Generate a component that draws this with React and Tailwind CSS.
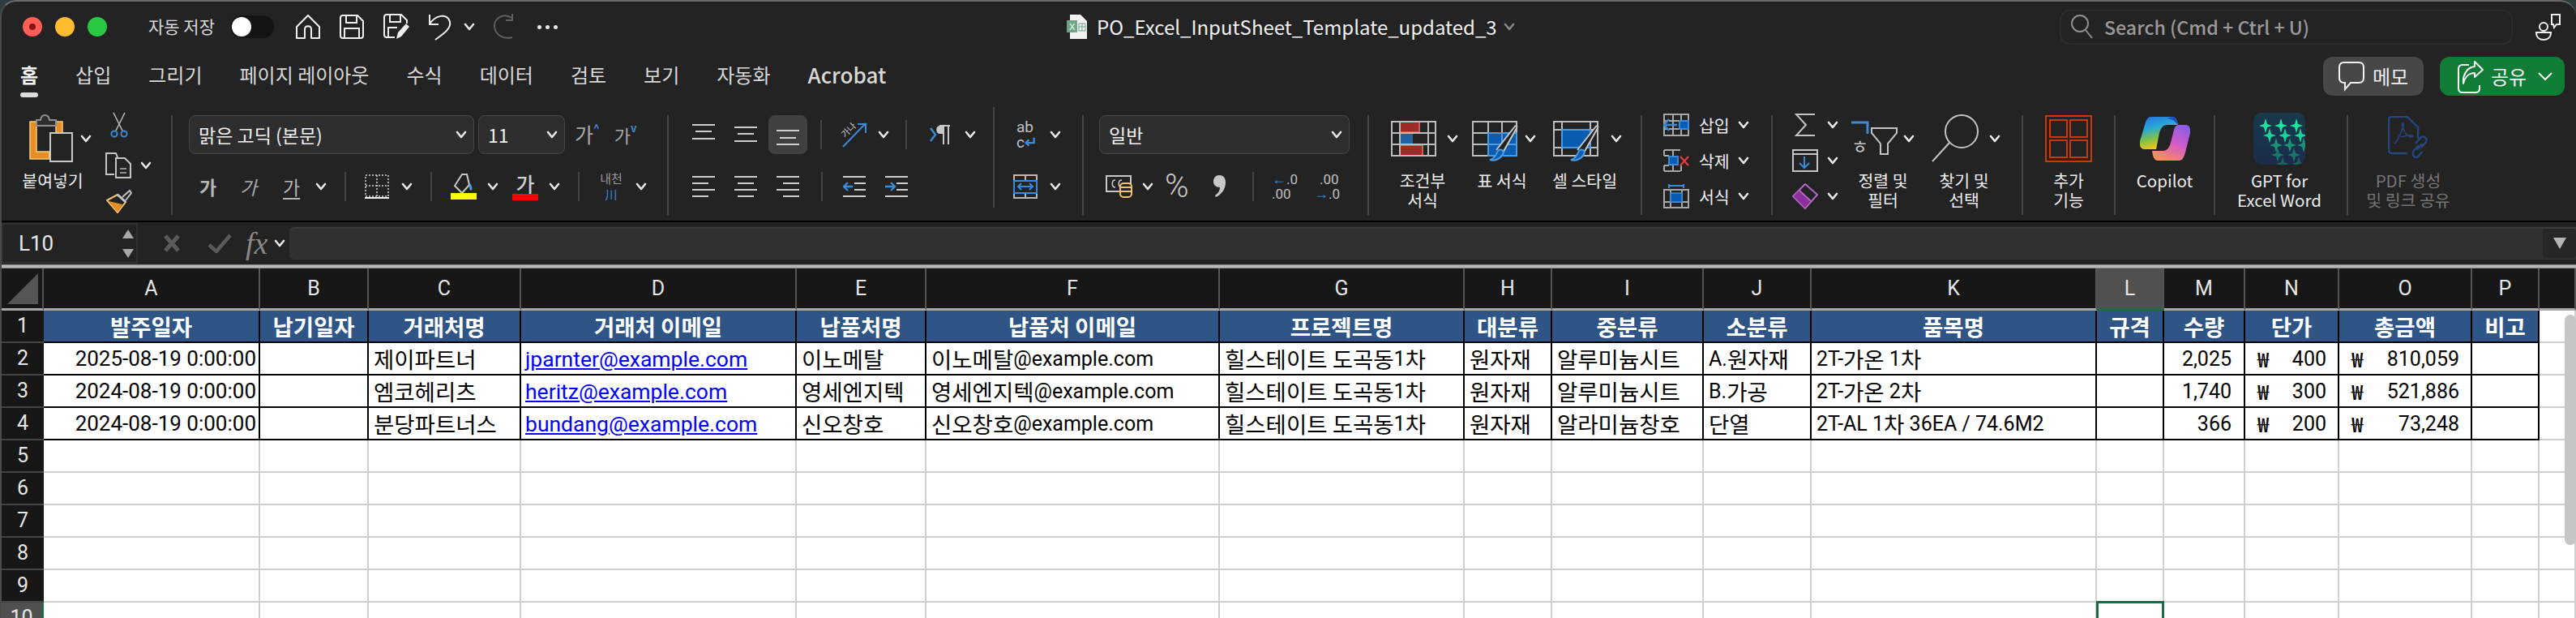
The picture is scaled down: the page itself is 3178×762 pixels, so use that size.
import React from 'react';

const KR = "font-['Noto_Sans_CJK_KR',sans-serif]";

const columns = ['A', 'B', 'C', 'D', 'E', 'F', 'G', 'H', 'I', 'J', 'K', 'L', 'M', 'N', 'O', 'P'];
const headers = ['발주일자', '납기일자', '거래처명', '거래처 이메일', '납품처명', '납품처 이메일', '프로젝트명', '대분류', '중분류', '소분류', '품목명', '규격', '수량', '단가', '총금액', '비고'];
const rows = [
  ['2025-08-19 0:00:00', '', '제이파트너', 'jparnter@example.com', '이노메탈', '이노메탈@example.com', '힐스테이트 도곡동1차', '원자재', '알루미늄시트', 'A.원자재', '2T-가온 1차', '', '2,025', '400', '810,059', ''],
  ['2024-08-19 0:00:00', '', '엠코헤리츠', 'heritz@example.com', '영세엔지텍', '영세엔지텍@example.com', '힐스테이트 도곡동1차', '원자재', '알루미늄시트', 'B.가공', '2T-가온 2차', '', '1,740', '300', '521,886', ''],
  ['2024-08-19 0:00:00', '', '분당파트너스', 'bundang@example.com', '신오창호', '신오창호@example.com', '힐스테이트 도곡동1차', '원자재', '알라미늄창호', '단열', '2T-AL 1차 36EA / 74.6M2', '', '366', '200', '73,248', ''],
];

// hangul runs larger than latin, the sheet font has wide hangul and narrow digits
const Mixed = ({ text }) =>
  text.split(/([\u3131-\uD79D]+)/).map((part, i) =>
    /[\u3131-\uD79D]/.test(part) ? (
      <span key={i} className="text-[27.5px]">{part}</span>
    ) : (
      <span key={i} className="font-['Roboto',sans-serif] text-[25px] whitespace-pre">{part}</span>
    )
  );

const Chev = ({ className = '', color = '#e8e8e8' }) => (
  <svg width="14" height="10" viewBox="0 0 14 10" className={`shrink-0 ${className}`}>
    <path d="M2 2 L7 8 L12 2" fill="none" stroke={color} strokeWidth="2.6" strokeLinecap="round" strokeLinejoin="round" />
  </svg>
);

const BigSep = () => <div className="w-[2px] h-[123px] mt-[10px] shrink-0 bg-[#454545]" />;
const TopSep = () => <div className="w-[2px] h-[124px] shrink-0 bg-[#454545]" />;
const SmallSep = ({ className = '' }) => <div className={`w-[2px] h-[36px] shrink-0 bg-[#454545] ${className}`} />;

const Lines = ({ lines, className = '' }) => (
  <svg width="28" height="28" viewBox="0 0 28 28" className={`shrink-0 ${className}`}>
    {lines.map(([x1, x2, y], i) => (
      <line key={i} x1={x1} x2={x2} y1={y} y2={y} stroke="#cdcdcd" strokeWidth="2" />
    ))}
  </svg>
);

const Paste = () => (
  <svg width="54" height="60" viewBox="0 0 54 60" className="shrink-0">
    <path d="M1 9 H9 V46 H25 V55 H1 Z" fill="#e58e26" stroke="#f5cd7e" strokeWidth="1.5" />
    <path d="M33 9 H41 V23 H33 Z" fill="#e58e26" stroke="#f5cd7e" strokeWidth="1.5" />
    <path d="M9 14 V7 H14 C15 -1 24 -1 25 7 H33 V14 Z" fill="#2e2e2e" stroke="#8f8f8f" strokeWidth="2" />
    <rect x="26" y="23" width="27" height="35" fill="#232323" stroke="#c9c9c9" strokeWidth="2" />
  </svg>
);

const Scissors = () => (
  <svg width="22" height="32" viewBox="0 0 22 32">
    <path d="M4 1 L15 23 M18 1 L7 23" stroke="#b8b8b8" strokeWidth="1.6" fill="none" />
    <circle cx="5" cy="27" r="3.6" fill="none" stroke="#3a8ad8" strokeWidth="2" />
    <circle cx="17" cy="27" r="3.6" fill="none" stroke="#3a8ad8" strokeWidth="2" />
  </svg>
);

const CopyIcon = () => (
  <svg width="32" height="32" viewBox="0 0 32 32">
    <path d="M11 27 H1 V1 H13 L15 6" fill="none" stroke="#c4c4c4" strokeWidth="2" />
    <path d="M13 7 H24 L31 14 V31 H13 Z" fill="none" stroke="#c4c4c4" strokeWidth="2" />
    <path d="M18 20 H26 M18 25 H26" stroke="#8f8f8f" strokeWidth="2" />
  </svg>
);

const Brush = () => (
  <svg width="32" height="30" viewBox="0 0 32 30">
    <path d="M20 10 L29 2 L31 5 L24 14" fill="none" stroke="#c4c4c4" strokeWidth="2" />
    <path d="M1 14 L14 7 L24 16 L14 29 Z" fill="none" stroke="#f3c26b" strokeWidth="2" />
    <path d="M3 15 L20 19 L14 28 Z" fill="#e58e26" />
    <path d="M14 7 L24 16" stroke="#c4c4c4" strokeWidth="3" />
  </svg>
);

const Borders = () => (
  <svg width="30" height="30" viewBox="0 0 30 30">
    <rect x="1" y="1" width="28" height="26" fill="none" stroke="#d8d8d8" strokeWidth="1.5" strokeDasharray="2 2" />
    <path d="M15 1 V27 M1 14 H29" stroke="#d8d8d8" strokeWidth="1.5" strokeDasharray="2 2" />
    <path d="M0 29 H30" stroke="#f2f2f2" strokeWidth="2" />
  </svg>
);

const Fill = () => (
  <svg width="32" height="32" viewBox="0 0 32 32">
    <path d="M14 1 L20 1 L23 14 L14 24 L5 15 Z" fill="none" stroke="#c8c8c8" strokeWidth="2" />
    <path d="M24 12 C27 16 27 20 25 21 C23 20 22 16 24 12 Z" fill="#4c9be0" />
    <rect x="0" y="24" width="32" height="8" fill="#ffff00" />
  </svg>
);

const Orientation = () => (
  <svg width="34" height="32" viewBox="0 0 34 32" className="overflow-visible">
    <path d="M4 31 L32 2 M22 3 H32 V14" fill="none" stroke="#3a8ad8" strokeWidth="2" />
    <text x="1" y="17" fontSize="11" fill="#c8c8c8" transform="rotate(-45 8 12)" fontFamily="Noto Sans CJK KR">가나</text>
  </svg>
);

const Pilcrow = () => (
  <svg width="26" height="28" viewBox="0 0 26 28" className="shrink-0">
    <path d="M1 6 L7 14 L1 22" fill="none" stroke="#3a8ad8" strokeWidth="2.4" />
    <path d="M17 3 H12 C7 3 7 13 12 13 H17 Z" fill="#c8c8c8" />
    <path d="M17 3 V26 M23 3 V26 M12 3 H25" fill="none" stroke="#c8c8c8" strokeWidth="2" />
  </svg>
);

const Comma = () => (
  <svg width="16" height="28" viewBox="0 0 16 28" className="shrink-0">
    <path d="M7 0 C12 0 15 3 15 9 C15 17 10 24 3 27 L2 25 C6 22 8 19 8 15 C3 15 0 12 0 8 C0 3 3 0 7 0 Z" fill="#c8c8c8" />
  </svg>
);

const Indent = ({ flip }) => (
  <svg width="28" height="26" viewBox="0 0 28 26" className="shrink-0">
    <path d="M0 1 H28 M14 9 H28 M14 17 H28 M0 25 H28" stroke="#cdcdcd" strokeWidth="2" />
    {flip ? (
      <path d="M0 13 H11 M7 8 L12 13 L7 18" fill="none" stroke="#3a8ad8" strokeWidth="2.4" />
    ) : (
      <path d="M1 13 H12 M6 8 L1 13 L6 18" fill="none" stroke="#3a8ad8" strokeWidth="2.4" />
    )}
  </svg>
);

const Merge = () => (
  <svg width="30" height="30" viewBox="0 0 30 30" className="shrink-0">
    <rect x="1" y="1" width="28" height="28" fill="none" stroke="#b8b8b8" strokeWidth="2" />
    <path d="M15 1 V8 M15 23 V29" stroke="#b8b8b8" strokeWidth="2" />
    <rect x="1" y="8" width="28" height="15" fill="#232323" stroke="#3a8ad8" strokeWidth="2" />
    <path d="M6 15 H24 M10 11 L6 15 L10 19 M20 11 L24 15 L20 19" fill="none" stroke="#3a8ad8" strokeWidth="2" />
  </svg>
);

const Currency = () => (
  <svg width="33" height="28" viewBox="0 0 33 28" className="shrink-0">
    <rect x="1" y="1" width="30" height="19" fill="none" stroke="#c8c8c8" strokeWidth="2" />
    <path d="M12 6 C7 6 7 15 12 15 M20 6 C15 6 15 15 20 15" fill="none" stroke="#c8c8c8" strokeWidth="1.6" />
    <rect x="18" y="10" width="14" height="17" rx="4" fill="#232323" stroke="#f3c26b" strokeWidth="2" />
    <path d="M18 15 H32 M18 20 H32" stroke="#f3c26b" strokeWidth="2" />
  </svg>
);

const GridBase = ({ children }) => (
  <svg width="56" height="44" viewBox="0 0 56 44" className="shrink-0">
    {children}
    <path d="M1 1 H55 V43 H1 Z M1 15 H55 M1 29 H55 M11 1 V43 M46 1 V43" fill="none" stroke="#bdbdbd" strokeWidth="2" />
  </svg>
);

const CondFormat = () => (
  <GridBase>
    <rect x="10" y="0" width="26" height="15" fill="#9f2a2a" />
    <rect x="10" y="15" width="17" height="14" fill="#22639f" />
    <rect x="10" y="29" width="30" height="15" fill="#9f2a2a" />
    <path d="M11 1 H35 V14 H11 Z M11 30 H39 V43 H11 Z" fill="none" stroke="#d65a5a" strokeWidth="2" />
  </GridBase>
);

const PaintBrush = () => (
  <g>
    <path d="M30 36 L52 8 C54 5 56 6 55 9 L37 41" fill="#232323" stroke="#c8c8c8" strokeWidth="2" />
    <path d="M22 48 C30 47 30 38 33 36 C37 34 40 38 38 41 C35 47 28 50 22 48 Z" fill="#0a5cb0" stroke="#4c9be0" strokeWidth="2" />
  </g>
);

const TableFormat = () => (
  <svg width="58" height="52" viewBox="0 0 58 52" className="shrink-0 mt-[8px]">
    <path d="M1 1 H55 V43 H1 Z M1 15 H55 M1 29 H55 M20 1 V43 M37 1 V43" fill="none" stroke="#bdbdbd" strokeWidth="2" />
    <rect x="20" y="15" width="35" height="28" fill="#0a5cb0" stroke="#4c9be0" strokeWidth="2" />
    <path d="M37 15 V43 M20 29 H55" stroke="#4c9be0" strokeWidth="2" />
    <PaintBrush />
  </svg>
);

const CellStyle = () => (
  <svg width="58" height="52" viewBox="0 0 58 52" className="shrink-0 mt-[8px]">
    <path d="M1 1 H55 V43 H1 Z M1 11 H55 M1 33 H55 M11 1 V43 M46 1 V43" fill="none" stroke="#bdbdbd" strokeWidth="2" />
    <rect x="11" y="11" width="35" height="22" fill="#0a5cb0" stroke="#4c9be0" strokeWidth="2" />
    <PaintBrush />
  </svg>
);

const CellInsert = () => (
  <svg width="32" height="28" viewBox="0 0 32 28" className="shrink-0">
    <path d="M1 1 H31 V27 H1 Z M1 9 H31 M1 19 H31 M12 1 V27 M22 1 V27" fill="none" stroke="#a8a8a8" strokeWidth="2" />
    <rect x="20" y="9" width="11" height="10" fill="#0a5cb0" stroke="#3a8ad8" strokeWidth="2" />
    <path d="M1 14 H17 M7 7 L1 14 L7 21" fill="#232323" stroke="#3a8ad8" strokeWidth="2.4" />
  </svg>
);

const CellDelete = () => (
  <svg width="32" height="28" viewBox="0 0 32 28" className="shrink-0">
    <path d="M1 1 H21 M1 27 H21 M1 1 V8 M1 20 V27 M12 1 V8 M12 20 V27 M22 20 V27" fill="none" stroke="#a8a8a8" strokeWidth="2" />
    <rect x="7" y="9" width="11" height="10" fill="#0a5cb0" stroke="#3a8ad8" strokeWidth="2" />
    <path d="M1 8 H7 M1 20 H7" stroke="#a8a8a8" strokeWidth="2" />
    <path d="M21 9 L31 20 M31 9 L21 20" stroke="#e03c3c" strokeWidth="2.4" />
  </svg>
);

const CellFormat = () => (
  <svg width="32" height="30" viewBox="0 0 32 30" className="shrink-0">
    <path d="M7 2 H25 M7 0 V5 M25 0 V5" stroke="#3a8ad8" strokeWidth="2" />
    <path d="M1 7 H31 V29 H1 Z M1 22 H31 M9 7 V29 M23 7 V29" fill="none" stroke="#a8a8a8" strokeWidth="2" />
    <rect x="9" y="11" width="14" height="11" fill="#0a5cb0" stroke="#3a8ad8" strokeWidth="1.5" />
  </svg>
);

const Sigma = () => (
  <svg width="32" height="28" viewBox="0 0 32 28" className="shrink-0">
    <path d="M28 1 H5 L17 14 L5 27 H28" fill="none" stroke="#c4c4c4" strokeWidth="2" />
  </svg>
);

const FillDown = () => (
  <svg width="32" height="28" viewBox="0 0 32 28" className="shrink-0">
    <path d="M1 1 H31 V27 H1 Z M1 6 H31" fill="none" stroke="#c4c4c4" strokeWidth="2" />
    <path d="M15 9 V23 M9 17 L15 23 L21 17" fill="none" stroke="#3a8ad8" strokeWidth="2" />
  </svg>
);

const Eraser = () => (
  <svg width="32" height="32" viewBox="0 0 32 32" className="shrink-0">
    <path d="M1 16 L9 24 L16 31 L31 14 L16 1 Z" fill="none" stroke="#b564c4" strokeWidth="2" />
    <path d="M2 16 L9 9 L22 22 L16 30 Z" fill="#8a2f9c" />
    <path d="M9 9 L23 22" stroke="#b564c4" strokeWidth="2" />
  </svg>
);

const SortFilter = () => (
  <svg width="58" height="44" viewBox="0 0 58 44" className="shrink-0 overflow-visible">
    <path d="M0 2 H20 V16" fill="none" stroke="#3a8ad8" strokeWidth="3" />
    <path d="M25 9 H56 V15 L45 28 V41 H36 V28 L25 15 Z" fill="none" stroke="#c4c4c4" strokeWidth="2" />
    <text x="0" y="40" fontSize="23" fill="#c4c4c4" fontFamily="Noto Sans CJK KR">ㅎ</text>
  </svg>
);

const Magnifier = () => (
  <svg width="60" height="60" viewBox="0 0 60 60" className="shrink-0">
    <circle cx="37" cy="21" r="20" fill="none" stroke="#c4c4c4" strokeWidth="2" />
    <path d="M22 35 L1 58" stroke="#c4c4c4" strokeWidth="2" />
  </svg>
);

const AddIns = () => (
  <svg width="58" height="58" viewBox="0 0 58 58">
    <rect x="1" y="1" width="56" height="56" fill="none" stroke="#c8380f" strokeWidth="2" />
    <path d="M6 6 H27 V27 H6 Z M31 6 H52 V27 H31 Z M6 31 H27 V52 H6 Z M31 31 H52 V52 H31 Z" fill="none" stroke="#c8380f" strokeWidth="2" />
  </svg>
);

const Copilot = () => (
  <svg width="62" height="54" viewBox="0 0 62 54">
    <defs>
      <linearGradient id="cpA" x1="0" y1="0" x2="0.3" y2="1">
        <stop offset="0" stopColor="#1f6fe0" />
        <stop offset="0.4" stopColor="#2aa8d8" />
        <stop offset="0.7" stopColor="#7cc04a" />
        <stop offset="1" stopColor="#f5c518" />
      </linearGradient>
      <linearGradient id="cpB" x1="0.8" y1="0" x2="0.3" y2="1">
        <stop offset="0" stopColor="#8a5ce8" />
        <stop offset="0.5" stopColor="#d45cc8" />
        <stop offset="1" stopColor="#f7905a" />
      </linearGradient>
    </defs>
    <path d="M14 0 H40 C44 0 46 4 47 10 H34 C28 10 26 14 24 20 L20 40 H6 C1 40 -1 36 0 30 L6 10 C8 3 10 0 14 0 Z" fill="url(#cpA)" />
    <path d="M47 10 C42 4 38 2 32 2 L40 0 C44 0 46 5 47 10 Z" fill="#1c4fc4" />
    <path d="M48 54 H22 C18 54 16 50 15 42 H28 C34 42 36 38 38 32 L42 16 C44 10 46 10 52 10 H56 C61 10 63 14 62 20 L56 44 C54 51 52 54 48 54 Z" fill="url(#cpB)" />
  </svg>
);

const Star = ({ x, y, op }) => (
  <path
    d={`M${x} ${y - 9} L${x + 2} ${y - 2} L${x + 8} ${y} L${x + 2} ${y + 2} L${x} ${y + 9} L${x - 2} ${y + 2} L${x - 8} ${y} L${x - 2} ${y - 2} Z`}
    fill="#19e6a0"
    opacity={op}
  />
);

const GptIcon = () => (
  <svg width="64" height="64" viewBox="0 0 64 64">
    <defs>
      <linearGradient id="gptBg" x1="0" y1="0" x2="0" y2="1">
        <stop offset="0" stopColor="#173a4a" />
        <stop offset="1" stopColor="#1c2c4a" />
      </linearGradient>
      <clipPath id="gptClip">
        <rect width="64" height="64" rx="10" />
      </clipPath>
    </defs>
    <g clipPath="url(#gptClip)">
      <rect width="64" height="64" fill="url(#gptBg)" />
      <Star x={15} y={16} op={1} />
      <Star x={34} y={16} op={1} />
      <Star x={53} y={16} op={1} />
      <Star x={20} y={28} op={0.9} />
      <Star x={39} y={28} op={0.9} />
      <Star x={58} y={28} op={0.9} />
      <Star x={28} y={40} op={0.55} />
      <Star x={45} y={40} op={0.55} />
      <Star x={62} y={40} op={0.55} />
      <Star x={30} y={52} op={0.4} />
      <Star x={50} y={52} op={0.4} />
      <Star x={36} y={63} op={0.3} />
      <Star x={56} y={63} op={0.3} />
    </g>
  </svg>
);

const PdfIcon = () => (
  <svg width="50" height="56" viewBox="0 0 50 56">
    <path d="M24 46 H5 C2 46 1 44 1 42 V4 C1 2 2 1 5 1 H24 L37 14 V28" fill="none" stroke="#26467c" strokeWidth="2.4" />
    <path d="M8 34 C14 28 20 12 19 9 C17 8 17 14 22 22 C26 26 30 27 31 25 C30 23 22 24 16 26" fill="none" stroke="#26467c" strokeWidth="1.6" />
    <path d="M34 34 L41 26 C45 24 49 28 47 32 L41 39 M38 36 L31 44 C30 49 33 53 37 50 L42 44 M36 42 L42 34" fill="none" stroke="#26467c" strokeWidth="2.4" />
  </svg>
);

const ExcelFile = () => (
  <svg width="26" height="30" viewBox="0 0 26 30">
    <path d="M4 0 H17 L25 8 V30 H4 Z" fill="#f2f2f2" />
    <rect x="0" y="7" width="13" height="15" fill="#6da587" />
    <text x="3" y="19" fontSize="11" fill="#ffffff" fontFamily="Liberation Sans">X</text>
    <path d="M15 11 H23 V20 H15 Z M19 11 V20 M15 15 H23" fill="none" stroke="#6da587" strokeWidth="1" />
  </svg>
);

const Button = ({ icon, lines, width, pad, gap, chev = true, labelClass = 'text-[#ececec]' }) => (
  <div className={`flex flex-col items-center shrink-0 ${width}`}>
    <div className={`h-[78px] w-full flex items-center ${pad}`}>
      {icon}
      {chev && <Chev className={gap} />}
    </div>
    <div className={`text-[20.5px] leading-[24px] text-center whitespace-nowrap ${labelClass}`}>
      {lines.map((line) => (
        <div key={line}>{line}</div>
      ))}
    </div>
  </div>
);

const SmallRow = ({ children }) => <div className="h-[44px] flex items-center">{children}</div>;

const Select = ({ text, width, textClass = 'pl-[11px]', chevClass = 'ml-auto mr-[8px]' }) => (
  <div className={`h-[48px] shrink-0 flex items-center rounded-[8px] bg-[#2e2e2e] border border-[#454545] ${width}`}>
    <span className={`text-[23px] text-[#f0f0f0] whitespace-nowrap ${textClass}`}>{text}</span>
    <Chev className={chevClass} />
  </div>
);

const Ribbon = () => (
  <div className="flex h-[140px] items-start">
    {/* paste */}
    <div className="w-[209px] shrink-0 flex">
      <Button width="w-[126px]" pad="pl-[34px]" gap="ml-[9px]" icon={<Paste />} lines={['붙여넣기']} />
      <div className="flex flex-col items-start pt-[6px] ml-[2px]">
        <div className="h-[44px] flex items-start pl-[6px]"><Scissors /></div>
        <div className="h-[44px] flex items-center">
          <CopyIcon />
          <Chev className="ml-[11px]" />
        </div>
        <div className="h-[44px] flex items-center pl-[1px]"><Brush /></div>
      </div>
    </div>
    <BigSep />

    {/* font */}
    <div className="w-[610px] shrink-0 pt-[10px]">
      <div className="flex items-center pl-[20px]">
        <Select text="맑은 고딕 (본문)" width="w-[352px]" chevClass="ml-auto mr-[8px]" />
        <Select text="11" width="w-[107px] ml-[5px]" />
        <span className="ml-[12px] text-[25px] text-[#a8a8a8]">가</span>
        <span className="text-[13px] text-[#3a8ad8] -mt-[16px] font-bold">^</span>
        <span className="ml-[18px] text-[22px] text-[#a8a8a8]">가</span>
        <span className="text-[13px] text-[#3a8ad8] -mt-[16px] font-bold">v</span>
      </div>
      <div className="flex items-center h-[36px] mt-[22px] pl-[33px]">
        <span className="text-[23px] font-bold text-[#b4b4b4] w-[21px]">가</span>
        <span className="ml-[29px] text-[23px] italic text-[#a8a8a8] w-[21px]">가</span>
        <span className="ml-[32px] text-[23px] text-[#b5b5b5] w-[21px] underline underline-offset-4">가</span>
        <Chev className="ml-[19px]" />
        <SmallSep className="ml-[22px]" />
        <div className="ml-[23px]"><Borders /></div>
        <Chev className="ml-[15px]" />
        <SmallSep className="ml-[22px]" />
        <div className="ml-[23px]"><Fill /></div>
        <Chev className="ml-[13px]" />
        <div className="ml-[17px] w-[32px] flex flex-col items-center">
          <span className="text-[25px] leading-[26px] font-medium text-[#cfcfcf]">가</span>
          <div className="w-[32px] h-[8px] bg-[#ff0000]" />
        </div>
        <Chev className="ml-[13px]" />
        <SmallSep className="ml-[22px]" />
        <div className="ml-[23px] w-[32px] flex flex-col items-center">
          <span className="text-[15px] leading-[20px] text-[#9a9a9a] whitespace-nowrap">내천</span>
          <span className="text-[15px] leading-[20px] text-[#3a8ad8]">川</span>
        </div>
        <Chev className="ml-[14px]" />
      </div>
    </div>
    <BigSep />

    {/* alignment */}
    <div className="w-[400px] shrink-0 pt-[10px]">
      <div className="flex items-center h-[48px]">
        <Lines className="ml-[29px] -mt-[12px]" lines={[[0, 28, 8], [4, 24, 16], [0, 28, 25]]} />
        <Lines className="ml-[24px] -mt-[2px]" lines={[[0, 28, 6], [4, 24, 14], [0, 28, 23]]} />
        <div className="ml-[14px] w-[48px] h-[48px] rounded-[8px] bg-[#404040] flex items-center justify-center">
          <Lines className="mt-[7px]" lines={[[0, 28, 5], [4, 24, 14], [0, 28, 22]]} />
        </div>
        <SmallSep className="ml-[16px]" />
        <div className="ml-[22px]"><Orientation /></div>
        <Chev className="ml-[13px]" />
        <SmallSep className="ml-[20px]" />
        <div className="ml-[28px]"><Pilcrow /></div>
        <Chev className="ml-[17px]" />
      </div>
      <div className="flex items-center h-[36px] mt-[22px]">
        <Lines className="ml-[29px]" lines={[[0, 28, 2], [0, 20, 10], [0, 28, 18], [0, 20, 26]]} />
        <Lines className="ml-[24px]" lines={[[0, 28, 2], [4, 24, 10], [0, 28, 18], [4, 24, 26]]} />
        <Lines className="ml-[24px]" lines={[[0, 28, 2], [8, 28, 10], [0, 28, 18], [8, 28, 26]]} />
        <SmallSep className="ml-[27px]" />
        <div className="ml-[25px]"><Indent /></div>
        <div className="ml-[24px]"><Indent flip /></div>
      </div>
    </div>
    <TopSep />

    {/* wrap / merge */}
    <div className="w-[108px] shrink-0 pt-[10px]">
      <div className="flex items-center h-[48px] pl-[27px]">
        <div className="w-[30px] leading-[19px] text-[19px] text-[#c0c0c0] font-['Roboto',sans-serif]">
          <div>ab</div>
          <div className="flex items-center h-[19px]">c<span className="text-[#3a8ad8] text-[19px] leading-[19px] font-bold">↵</span></div>
        </div>
        <Chev className="ml-[11px]" />
      </div>
      <div className="flex items-center h-[36px] mt-[22px] pl-[23px]">
        <Merge />
        <Chev className="ml-[15px]" />
      </div>
    </div>
    <BigSep />

    {/* number */}
    <div className="w-[350px] shrink-0 pt-[10px]">
      <div className="flex pl-[19px]">
        <Select text="일반" width="w-[309px]" />
      </div>
      <div className="flex items-center h-[36px] mt-[22px] pl-[27px]">
        <Currency />
        <Chev className="ml-[12px]" />
        <span className="ml-[14px] w-[34px] text-[40px] leading-none font-light text-[#c8c8c8] font-['Roboto',sans-serif]">%</span>
        <div className="ml-[26px]"><Comma /></div>
        <SmallSep className="ml-[32px]" />
        <div className="ml-[22px] w-[34px] flex flex-col text-[17px] leading-[18px] text-[#c0c0c0] font-['Roboto',sans-serif]">
          <div className="flex items-center h-[18px] whitespace-nowrap"><span className="text-[#3a8ad8] text-[18px] leading-[18px] font-bold">←</span>.0</div>
          <div className="h-[18px] whitespace-nowrap">.00</div>
        </div>
        <div className="ml-[18px] w-[34px] flex flex-col text-[17px] leading-[18px] text-[#c0c0c0] font-['Roboto',sans-serif]">
          <div className="h-[18px] pl-[7px] whitespace-nowrap">.00</div>
          <div className="flex items-center h-[18px] whitespace-nowrap"><span className="text-[#3a8ad8] text-[18px] leading-[18px] font-bold">→</span>.0</div>
        </div>
      </div>
    </div>
    <BigSep />

    {/* styles */}
    <div className="w-[335px] shrink-0 flex pl-[17px]">
      <Button width="w-[98px]" pad="pl-[10px]" gap="ml-[13px]" icon={<CondFormat />} lines={['조건부', '서식']} />
      <Button width="w-[98px]" pad="pl-[12px]" gap="ml-[7px]" icon={<TableFormat />} lines={['표 서식']} />
      <Button width="w-[106px]" pad="pl-[14px]" gap="ml-[13px]" icon={<CellStyle />} lines={['셀 스타일']} />
    </div>
    <BigSep />

    {/* cells */}
    <div className="w-[159px] shrink-0 pt-0">
      {[['삽입', <CellInsert key="a" />], ['삭제', <CellDelete key="b" />], ['서식', <CellFormat key="c" />]].map(([label, icon]) => (
        <SmallRow key={label}>
          <div className="ml-[26px]">{icon}</div>
          <span className="ml-[12px] w-[48px] text-[20.5px] text-[#ececec]">{label}</span>
          <Chev />
        </SmallRow>
      ))}
    </div>
    <BigSep />

    {/* editing */}
    <div className="w-[307px] shrink-0 flex">
      <div className="w-[89px] shrink-0">
        {[<Sigma key="a" />, <FillDown key="b" />, <Eraser key="c" />].map((icon) => (
          <SmallRow key={icon.key}>
            <div className="ml-[24px]">{icon}</div>
            <Chev className="ml-[11px]" />
          </SmallRow>
        ))}
      </div>
      <Button width="w-[94px]" pad="pl-[8px]" gap="ml-[6px]" icon={<SortFilter />} lines={['정렬 및', '필터']} />
      <Button width="w-[106px]" pad="pl-[13px]" gap="ml-[11px]" icon={<Magnifier />} lines={['찾기 및', '선택']} />
    </div>
    <BigSep />

    <Button width="w-[112px]" pad="justify-center" chev={false} icon={<AddIns />} lines={['추가', '기능']} />
    <BigSep />
    <Button width="w-[121px]" pad="justify-center" chev={false} icon={<Copilot />} lines={['Copilot']} />
    <BigSep />
    <Button width="w-[158px] mr-[4px]" pad="justify-center" chev={false} icon={<GptIcon />} lines={['GPT for', 'Excel Word']} />
    <BigSep />
    <Button width="w-[148px]" pad="justify-center" chev={false} icon={<PdfIcon />} lines={['PDF 생성', '및 링크 공유']} labelClass="text-[#747474]" />
  </div>
);

const TitleBar = () => (
  <div className="h-[62px] flex items-center text-[#e8e8e8]">
    <div className="ml-[26px] w-[24px] h-[24px] rounded-full bg-[#ff5f57] flex items-center justify-center">
      <div className="w-[8px] h-[8px] rounded-full bg-[#8a1410]" />
    </div>
    <div className="ml-[16px] w-[24px] h-[24px] rounded-full bg-[#febc2e]" />
    <div className="ml-[16px] w-[24px] h-[24px] rounded-full bg-[#28c840]" />
    <span className="ml-[51px] text-[21px] text-[#d8d8d8] whitespace-nowrap">자동 저장</span>
    <div className="ml-[19px] w-[54px] h-[28px] rounded-full bg-[#141414] flex items-center pl-[2px]">
      <div className="w-[24px] h-[24px] rounded-full bg-white" />
    </div>
    <svg width="30" height="30" viewBox="0 0 30 30" className="ml-[27px]">
      <path d="M15 1 L29 15 V29 H19 V18 C19 13 11 13 11 18 V29 H1 V15 Z" fill="none" stroke="#f0f0f0" strokeWidth="2" strokeLinejoin="round" />
    </svg>
    <svg width="30" height="30" viewBox="0 0 30 30" className="ml-[24px]">
      <path d="M4 1 H22 L29 8 V26 C29 28 28 29 26 29 H4 C2 29 1 28 1 26 V4 C1 2 2 1 4 1 Z M8 1 V10 H21 V1 M6 29 V17 H24 V29" fill="none" stroke="#f0f0f0" strokeWidth="2" />
    </svg>
    <svg width="32" height="32" viewBox="0 0 32 32" className="ml-[24px]">
      <path d="M14 29 H4 C2 29 1 28 1 26 V4 C1 2 2 1 4 1 H22 L29 8 V12 M8 1 V10 H21 V1 M6 29 V17 H17" fill="none" stroke="#f0f0f0" strokeWidth="2" />
      <path d="M16 31 L18 23 L28 12 L32 16 L22 28 Z" fill="#f0f0f0" />
    </svg>
    <svg width="30" height="34" viewBox="0 0 30 34" className="ml-[23px]">
      <path d="M2 2 V14 L13 14 M2 14 C8 3 24 -1 27 11 C29 20 17 27 9 33" fill="none" stroke="#f0f0f0" strokeWidth="2" />
    </svg>
    <Chev className="ml-[14px]" />
    <svg width="28" height="32" viewBox="0 0 28 32" className="ml-[22px]">
      <path d="M23 5 C13 -2 1 6 2 16 C3 26 13 32 24 29 M24 0 V8 H16" fill="none" stroke="#5f5f5f" strokeWidth="2" />
    </svg>
    <div className="ml-[27px] flex gap-[5px]">
      <div className="w-[5px] h-[5px] rounded-full bg-[#e8e8e8]" />
      <div className="w-[5px] h-[5px] rounded-full bg-[#e8e8e8]" />
      <div className="w-[5px] h-[5px] rounded-full bg-[#e8e8e8]" />
    </div>
    <div className="ml-[628px]"><ExcelFile /></div>
    <span className="ml-[11px] text-[24px] text-[#f0f0f0] whitespace-nowrap">PO_Excel_InputSheet_Template_updated_3</span>
    <Chev className="ml-[8px]" color="#8a8a8a" />
    <div className="ml-auto mr-[78px] w-[559px] h-[43px] rounded-[12px] border-2 border-[#2c2c2c] flex items-center pl-[12px]">
      <svg width="27" height="30" viewBox="0 0 27 30">
        <circle cx="11" cy="11" r="10" fill="none" stroke="#8f8f8f" strokeWidth="2" />
        <path d="M18 19 L26 29" stroke="#8f8f8f" strokeWidth="2" />
      </svg>
      <span className="ml-[14px] text-[23.2px] font-medium text-[#9a9a9a] whitespace-nowrap">Search (Cmd + Ctrl + U)</span>
    </div>
    <svg width="32" height="34" viewBox="0 0 32 34" className="absolute right-[18px] top-[14px]">
      <path d="M20 2 H30 V14 L26 14 L23 18 L22 14 H20 Z" fill="none" stroke="#f0f0f0" strokeWidth="2" />
      <circle cx="10" cy="17" r="5" fill="none" stroke="#f0f0f0" strokeWidth="2" />
      <path d="M1 24 H19 C19 30 15 33 10 33 C5 33 1 30 1 24 Z" fill="none" stroke="#f0f0f0" strokeWidth="2" />
    </svg>
  </div>
);

const TabBar = () => (
  <div className="h-[68px] flex pl-[23px] pt-[8px] text-[24px] leading-[40px] text-[#d8d8d8] gap-[46px] relative">
    <div className="relative font-bold text-[#f4f4f4]">
      홈
      <div className="absolute left-0 right-0 top-[42px] h-[6px] rounded-full bg-[#dcdcdc]" />
    </div>
    {['삽입', '그리기', '페이지 레이아웃', '수식', '데이터', '검토', '보기', '자동화'].map((tab) => (
      <span key={tab} className="whitespace-nowrap">{tab}</span>
    ))}
    <span className="font-medium text-[26px]">Acrobat</span>
    <div className="absolute left-[2864px] top-[6px] w-[124px] h-[48px] rounded-[12px] bg-[#474747] flex items-center justify-center gap-[10px]">
      <svg width="32" height="44" viewBox="0 0 32 44">
        <path d="M7 5 H25 C29 5 31 7 31 11 V24 C31 28 29 30 25 30 H15 L8 38 V30 H7 C3 30 1 28 1 24 V11 C1 7 3 5 7 5 Z" fill="none" stroke="#f2f2f2" strokeWidth="2" />
      </svg>
      <span className="text-[24px] text-[#f2f2f2]">메모</span>
    </div>
    <div className="absolute left-[3008px] top-[6px] w-[154px] h-[48px] rounded-[12px] bg-[#107c36] flex items-center pl-[22px]">
      <svg width="32" height="46" viewBox="0 0 32 46">
        <path d="M14 9 H6 C3 9 1 11 1 14 V38 C1 41 3 43 6 43 H22 C25 43 27 41 27 38 V34" fill="none" stroke="#f2f2f2" strokeWidth="2" />
        <path d="M21 5 L31 15 L21 24 V19 C14 19 9 24 7 32 C6 22 11 12 21 11 Z" fill="none" stroke="#f2f2f2" strokeWidth="2" strokeLinejoin="round" />
      </svg>
      <span className="ml-[9px] text-[24px] text-[#f2f2f2]">공유</span>
      <svg width="18" height="12" viewBox="0 0 18 12" className="ml-[14px]">
        <path d="M1 2 L9 10 L17 2" fill="none" stroke="#f2f2f2" strokeWidth="2" />
      </svg>
    </div>
  </div>
);

const FormulaBar = () => (
  <div className="h-[52px] flex items-center bg-[#232323]">
    <div className="w-[168px] h-[50px] shrink-0 flex items-center justify-between border-2 border-[#303030] pl-[19px] pr-[3px]">
      <span className="text-[26px] text-[#e8e8e8] font-['Roboto',sans-serif]">L10</span>
      <div className="flex flex-col gap-[13px]">
        <div className="w-0 h-0 border-x-[7px] border-x-transparent border-b-[11px] border-b-[#a8a8a8]" />
        <div className="w-0 h-0 border-x-[7px] border-x-transparent border-t-[11px] border-t-[#a8a8a8]" />
      </div>
    </div>
    <svg width="22" height="22" viewBox="0 0 22 22" className="ml-[31px]">
      <path d="M3 2 L19 20 M19 2 L3 20" stroke="#5a5a5a" strokeWidth="5" />
    </svg>
    <svg width="30" height="24" viewBox="0 0 30 24" className="ml-[33px]">
      <path d="M2 14 L11 22 L28 2" fill="none" stroke="#5a5a5a" strokeWidth="4.5" />
    </svg>
    <span className="ml-[17px] w-[32px] text-[38px] leading-none italic text-[#8a8a8a] font-['Liberation_Serif',serif]">fx</span>
    <Chev className="ml-[3px]" />
    <div className="ml-[5px] flex-1 h-[40px] rounded-l-[6px] bg-[#303030] border-t-2 border-[#3a3a3a] flex justify-end">
      <div className="w-[41px] h-[36px] rounded-[4px] bg-[#262626] flex items-center justify-center">
        <div className="w-0 h-0 border-x-[8px] border-x-transparent border-t-[14px] border-t-[#b5b5b5]" />
      </div>
    </div>
  </div>
);

const colHead = 'flex items-center justify-center border-r-2 border-b-[3px] border-r-[#555555] border-b-[#a8a8a8] bg-[#171717] text-[#e6e6e6] text-[25px] font-[\'Roboto\',sans-serif]';
const rowHead = 'flex items-center justify-center border-b-2 border-b-[#444444] bg-[#171717] text-[#e6e6e6] text-[25px] font-[\'Roboto\',sans-serif]';
const inkCell = 'flex items-center pt-[1px] border-r-2 border-b-2 border-black bg-white text-black whitespace-nowrap';
const blankCell = 'border-r-2 border-b-2 border-[#cfcfcf] bg-white';

const dataCell = (value, c) => {
  if (c === 0) {
    return (
      <div className={`${inkCell} justify-end pr-[3px]`}>
        <span className="font-['Roboto',sans-serif] text-[26px]">{value}</span>
      </div>
    );
  }
  if (c === 3) {
    return (
      <div className={`${inkCell} pl-[5px]`}>
        <span className="text-[#0000ff] underline font-['Roboto',sans-serif] text-[26.5px]">{value}</span>
      </div>
    );
  }
  if (c === 12) return <div className={`${inkCell} justify-end pr-[15px]`}><Mixed text={value} /></div>;
  if (c === 13 || c === 14) {
    return (
      <div className={`${inkCell} justify-between pl-[15px] pr-[14px]`}>
        <span className="text-[25px] font-medium">₩</span>
        <Mixed text={value} />
      </div>
    );
  }
  return <div className={`${inkCell} pl-[6px]`}><Mixed text={value} /></div>;
};

const Sheet = () => (
  <div className="relative">
    <div className="grid grid-cols-[52px_267px_134px_188px_340px_160px_362px_302px_108px_187px_133px_352px_83px_100px_116px_164px_83px_1fr] grid-rows-[52px] auto-rows-[40px]">
      <div className="border-r-2 border-b-[3px] border-r-[#555555] border-b-[#a8a8a8] bg-[#171717] flex items-end justify-end pr-[5px] pb-[5px]">
        <div className="w-[38px] h-[38px] bg-[#555555] [clip-path:polygon(100%_0,100%_100%,0_100%)]" />
      </div>
      {columns.map((col) => (
        <div key={col} className={col === 'L' ? `${colHead} !bg-[#505050] !border-b-[#1d6b3e]` : colHead}>{col}</div>
      ))}
      <div className={colHead} />

      <div className={rowHead}>1</div>
      {headers.map((h) => (
        <div key={h} className="flex items-center justify-center pt-[2px] border-r-2 border-b-2 border-black bg-[#2f5586] text-white font-bold text-[27.5px] whitespace-nowrap">{h}</div>
      ))}
      <div className={blankCell} />

      {rows.map((row, r) => (
        <React.Fragment key={r}>
          <div className={rowHead}>{r + 2}</div>
          {row.map((value, c) => (
            <React.Fragment key={c}>{dataCell(value, c)}</React.Fragment>
          ))}
          <div className={blankCell} />
        </React.Fragment>
      ))}

      {[5, 6, 7, 8, 9, 10].map((n) => (
        <React.Fragment key={n}>
          <div className={n === 10 ? `${rowHead} !bg-[#505050] border-r-[3px] border-r-[#1d6b3e]` : rowHead}>{n}</div>
          {columns.map((col) => (
            <div key={col} className={`relative ${blankCell}`}>
              {n === 10 && col === 'L' && (
                <div className="absolute -left-[1px] -right-[2px] -top-[2px] h-[40px] border-[3px] border-[#1d6b3e]" />
              )}
            </div>
          ))}
          <div className={blankCell} />
        </React.Fragment>
      ))}
    </div>
    <div className="absolute right-0 top-[57px] w-[14px] h-[284px] rounded-full bg-[#c6c6c6]" />
  </div>
);

export default function App() {
  return (
    <div className="h-[762px] overflow-hidden bg-[#2d3d3f]">
      <div className={`relative h-[762px] rounded-t-[20px] border-t-2 border-l-2 border-t-[#6b6b6b] border-l-[#4a4a4a] bg-[#232323] ${KR}`}>
        <TitleBar />
        <TabBar />
        <Ribbon />
        <div className="h-[2px] bg-black" />
        <FormulaBar />
        <div className="h-[5px] bg-[#b8b8b8] border-t border-b border-[#8a8a8a]" />
        <Sheet />
      </div>
    </div>
  );
}
